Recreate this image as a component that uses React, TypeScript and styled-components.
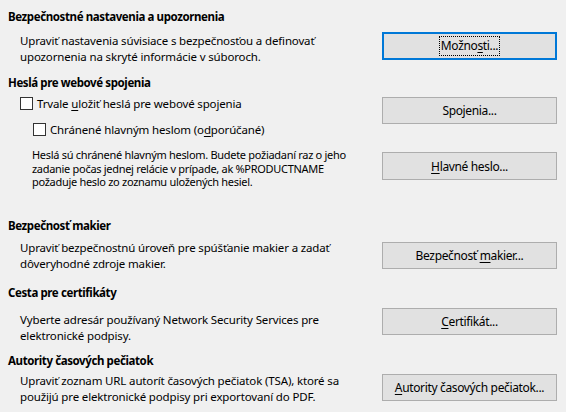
import React from "react";
import styled, { createGlobalStyle } from "styled-components";

const Global = createGlobalStyle`
  html, body { margin: 0; padding: 0; background: #f0f0f0; }
  body {
    font-family: "Noto Sans", "Open Sans", sans-serif;
    font-size: 11.5px;
    letter-spacing: -0.15px;
    color: #000;
  }
`;

const Page = styled.div`
  width: 566px;
  height: 412px;
  box-sizing: border-box;
  padding: 9px 9px 0 8px;
  background: #f0f0f0;
  display: flex;
  flex-direction: column;
`;

const Heading = styled.div<{ $top?: number }>`
  font-weight: 700;
  font-size: 11.5px;
  letter-spacing: -0.4px;
  line-height: 16px;
  height: 16px;
  margin-top: ${(p) => p.$top ?? 0}px;
  white-space: nowrap;
`;

const Row = styled.div<{ $top?: number }>`
  display: grid;
  grid-template-columns: 1fr 175px;
  align-items: start;
  margin-top: ${(p) => p.$top ?? 0}px;
`;

const Desc = styled.div<{ $top?: number }>`
  padding-left: 12px;
  line-height: 16px;
  margin-top: ${(p) => p.$top ?? 0}px;
  white-space: nowrap;
`;

const Small = styled.div`
  padding-left: 24px;
  font-size: 11px;
  letter-spacing: -0.3px;
  line-height: 13.5px;
  white-space: nowrap;
`;

const Button = styled.button<{ $top?: number; $h?: number; $focused?: boolean }>`
  box-sizing: border-box;
  width: 175px;
  height: ${(p) => p.$h ?? 27}px;
  margin: ${(p) => p.$top ?? 0}px 0 0 0;
  padding: 0;
  background: #e1e1e1;
  border: ${(p) => (p.$focused ? "2px solid #0078d7" : "1px solid #adadad")};
  font-family: inherit;
  font-size: 12px;
  letter-spacing: -0.35px;
  color: #000;
  display: flex;
  align-items: center;
  justify-content: center;
`;

const Focus = styled.span`
  outline: 1px dotted #000;
  padding: 1px 1px;
  line-height: 16px;
`;

const CheckRow = styled.label<{ $indent: number; $top?: number }>`
  display: flex;
  align-items: center;
  gap: 4px;
  height: 13px;
  padding-left: ${(p) => p.$indent}px;
  margin-top: ${(p) => p.$top ?? 0}px;
  white-space: nowrap;
`;

const Box = styled.span`
  box-sizing: border-box;
  width: 13px;
  height: 13px;
  background: #fff;
  border: 1px solid #333;
  flex: none;
`;

const U = styled.span`
  text-decoration: underline;
  text-underline-offset: 2px;
`;

const LeftCol = styled.div`
  display: flex;
  flex-direction: column;
`;

export default function App() {
  return (
    <>
      <Global />
      <Page>
        <Heading>Bezpečnostné nastavenia a upozornenia</Heading>
        <Row $top={7}>
          <Desc $top={1}>
            Upraviť nastavenia súvisiace s bezpečnosťou a definovať
            <br />
            upozornenia na skryté informácie v súboroch.
          </Desc>
          <Button $focused $h={28}>
            <Focus>
              Možno<U>s</U>ti...
            </Focus>
          </Button>
        </Row>

        <Heading $top={10}>Heslá pre webové spojenia</Heading>
        <Row $top={4}>
          <LeftCol>
            <CheckRow $indent={12} $top={2}>
              <Box />
              <span>
                Trvale <U>u</U>ložiť heslá pre webové spojenia
              </span>
            </CheckRow>
          </LeftCol>
          <Button $top={2}>Spojenia...</Button>
        </Row>
        <CheckRow $indent={25} $top={-1}>
          <Box />
          <span>
            Chránené hlavným heslom (o<U>d</U>porúčané)
          </span>
        </CheckRow>
        <Row $top={12}>
          <Small>
            Heslá sú chránené hlavným heslom. Budete požiadaní raz o jeho
            <br />
            zadanie počas jednej relácie v prípade, ak %PRODUCTNAME
            <br />
            požaduje heslo zo zoznamu uložených hesiel.
          </Small>
          <Button $top={4} $h={28}>
            <span>
              <U>H</U>lavné heslo...
            </span>
          </Button>
        </Row>

        <Heading $top={29}>Bezpečnosť makier</Heading>
        <Row $top={6}>
          <Desc>
            Upraviť bezpečnostnú úroveň pre spúšťanie makier a zadať
            <br />
            dôveryhodné zdroje makier.
          </Desc>
          <Button $top={2}>
            <span>
              Bezpečnosť <U>m</U>akier...
            </span>
          </Button>
        </Row>

        <Heading $top={13}>Cesta pre certifikáty</Heading>
        <Row $top={7}>
          <Desc $top={4}>
            Vyberte adresár používaný Network Security Services pre
            <br />
            elektronické podpisy.
          </Desc>
          <Button>
            <span>
              <U>C</U>ertifikát...
            </span>
          </Button>
        </Row>

        <Heading $top={9}>Autority časových pečiatok</Heading>
        <Row $top={4}>
          <Desc>
            Upraviť zoznam URL autorít časových pečiatok (TSA), ktoré sa
            <br />
            použijú pre elektronické podpisy pri exportovaní do PDF.
          </Desc>
          <Button $top={1}>
            <span>
              <U>A</U>utority časových pečiatok...
            </span>
          </Button>
        </Row>
      </Page>
    </>
  );
}
